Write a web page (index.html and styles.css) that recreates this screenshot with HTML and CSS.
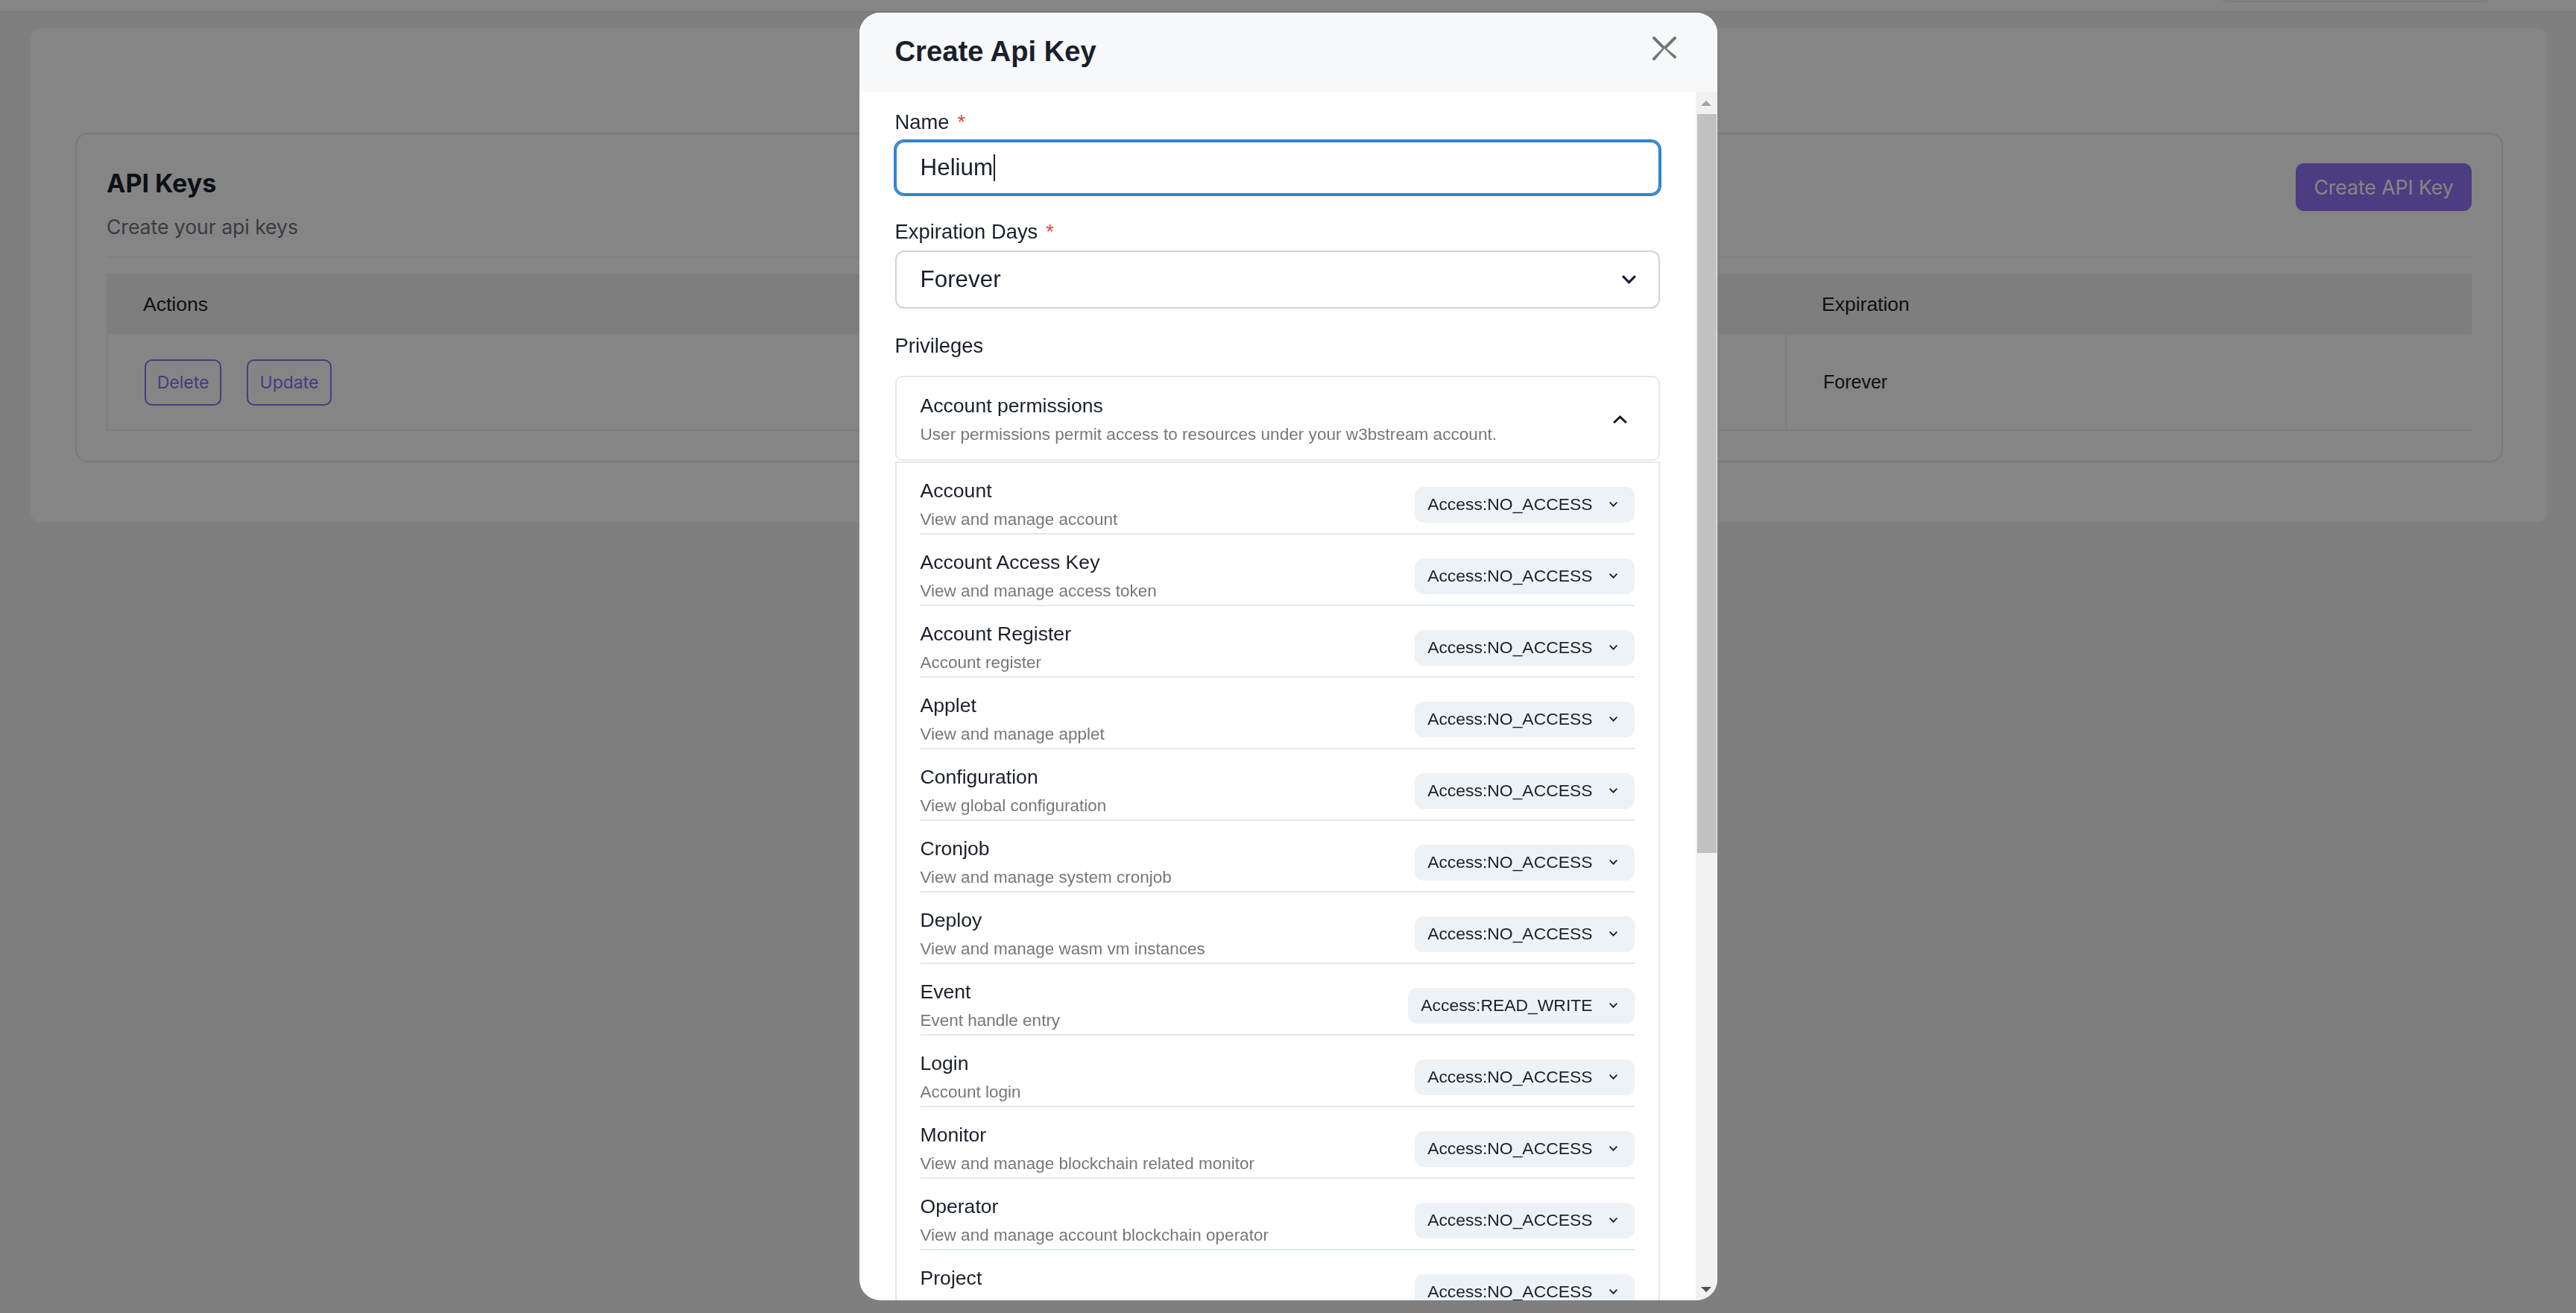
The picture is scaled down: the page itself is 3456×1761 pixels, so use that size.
FILE: index.html
```html
<!DOCTYPE html>
<html lang="en">
<head>
<meta charset="utf-8">
<title>API Keys</title>
<link rel="stylesheet" href="styles.css">
</head>
<body>
<div class="topbar"><div class="topbar-pill"></div></div>
<div class="main">
  <div class="panel">
    <div class="card">
      <div class="card-head">
        <div>
          <div class="card-title">API Keys</div>
          <div class="card-sub">Create your api keys</div>
        </div>
        <div class="btn-create">Create API Key</div>
      </div>
      <div class="card-divider"></div>
      <div class="table">
        <div class="thead">
          <div class="th">Actions</div>
          <div class="th">Name</div>
          <div class="th">Expiration</div>
        </div>
        <div class="trow">
          <div class="td"><span class="btn-outline btn-del">Delete</span><span class="btn-outline btn-upd">Update</span></div>
          <div class="td">Helium</div>
          <div class="td">Forever</div>
        </div>
      </div>
    </div>
  </div>
</div>

<div class="overlay">
  <div class="modal">
    <div class="modal-head">
      <h2 class="modal-title">Create Api Key</h2>
      <svg class="close" viewBox="0 0 24 24" width="32" height="32"><path fill="#757575" d="M.439,21.44a1.5,1.5,0,0,0,2.122,2.121L11.823,12.3a.25.25,0,0,1,.354,0l9.262,9.263a1.5,1.5,0,1,0,2.122-2.121L14.3,12.177a.25.25,0,0,1,0-.354l9.263-9.262A1.5,1.5,0,0,0,21.439.44L12.177,9.7a.25.25,0,0,1-.354,0L2.561.44A1.5,1.5,0,0,0,.439,2.561L9.7,11.823a.25.25,0,0,1,0,.354Z"/></svg>
    </div>
    <div class="modal-body">
      <div class="content">
        <div class="field">
          <div class="label">Name<span class="req">*</span></div>
          <div class="input"><span>Helium</span><span class="caret"></span></div>
        </div>
        <div class="field">
          <div class="label">Expiration Days<span class="req">*</span></div>
          <div class="select"><span>Forever</span>
            <svg class="chev-lg" viewBox="6 8.59 12 7.41" preserveAspectRatio="none"><path fill="#1a202c" d="M16.59 8.59L12 13.17 7.41 8.59 6 10l6 6 6-6z"/></svg>
          </div>
        </div>
        <div class="field">
          <div class="label priv">Privileges</div>
          <div class="acc-btn">
            <div>
              <div class="acc-title">Account permissions</div>
              <div class="acc-desc">User permissions permit access to resources under your w3bstream account.</div>
            </div>
            <svg class="chev-up" viewBox="6 8.59 12 7.41" preserveAspectRatio="none"><path fill="#1a202c" d="M16.59 8.59L12 13.17 7.41 8.59 6 10l6 6 6-6z"/></svg>
          </div>
          <div class="acc-panel">
            <div class="perm"><div><div class="perm-name">Account</div><div class="perm-desc">View and manage account</div></div><div class="pill">Access:NO_ACCESS<svg class="chev-sm" viewBox="6 8.59 12 7.41" preserveAspectRatio="none"><path d="M16.59 8.59L12 13.17 7.41 8.59 6 10l6 6 6-6z"/></svg></div></div>
            <div class="perm"><div><div class="perm-name">Account Access Key</div><div class="perm-desc">View and manage access token</div></div><div class="pill">Access:NO_ACCESS<svg class="chev-sm" viewBox="6 8.59 12 7.41" preserveAspectRatio="none"><path d="M16.59 8.59L12 13.17 7.41 8.59 6 10l6 6 6-6z"/></svg></div></div>
            <div class="perm"><div><div class="perm-name">Account Register</div><div class="perm-desc">Account register</div></div><div class="pill">Access:NO_ACCESS<svg class="chev-sm" viewBox="6 8.59 12 7.41" preserveAspectRatio="none"><path d="M16.59 8.59L12 13.17 7.41 8.59 6 10l6 6 6-6z"/></svg></div></div>
            <div class="perm"><div><div class="perm-name">Applet</div><div class="perm-desc">View and manage applet</div></div><div class="pill">Access:NO_ACCESS<svg class="chev-sm" viewBox="6 8.59 12 7.41" preserveAspectRatio="none"><path d="M16.59 8.59L12 13.17 7.41 8.59 6 10l6 6 6-6z"/></svg></div></div>
            <div class="perm"><div><div class="perm-name">Configuration</div><div class="perm-desc">View global configuration</div></div><div class="pill">Access:NO_ACCESS<svg class="chev-sm" viewBox="6 8.59 12 7.41" preserveAspectRatio="none"><path d="M16.59 8.59L12 13.17 7.41 8.59 6 10l6 6 6-6z"/></svg></div></div>
            <div class="perm"><div><div class="perm-name">Cronjob</div><div class="perm-desc">View and manage system cronjob</div></div><div class="pill">Access:NO_ACCESS<svg class="chev-sm" viewBox="6 8.59 12 7.41" preserveAspectRatio="none"><path d="M16.59 8.59L12 13.17 7.41 8.59 6 10l6 6 6-6z"/></svg></div></div>
            <div class="perm"><div><div class="perm-name">Deploy</div><div class="perm-desc">View and manage wasm vm instances</div></div><div class="pill">Access:NO_ACCESS<svg class="chev-sm" viewBox="6 8.59 12 7.41" preserveAspectRatio="none"><path d="M16.59 8.59L12 13.17 7.41 8.59 6 10l6 6 6-6z"/></svg></div></div>
            <div class="perm"><div><div class="perm-name">Event</div><div class="perm-desc">Event handle entry</div></div><div class="pill">Access:READ_WRITE<svg class="chev-sm" viewBox="6 8.59 12 7.41" preserveAspectRatio="none"><path d="M16.59 8.59L12 13.17 7.41 8.59 6 10l6 6 6-6z"/></svg></div></div>
            <div class="perm"><div><div class="perm-name">Login</div><div class="perm-desc">Account login</div></div><div class="pill">Access:NO_ACCESS<svg class="chev-sm" viewBox="6 8.59 12 7.41" preserveAspectRatio="none"><path d="M16.59 8.59L12 13.17 7.41 8.59 6 10l6 6 6-6z"/></svg></div></div>
            <div class="perm"><div><div class="perm-name">Monitor</div><div class="perm-desc">View and manage blockchain related monitor</div></div><div class="pill">Access:NO_ACCESS<svg class="chev-sm" viewBox="6 8.59 12 7.41" preserveAspectRatio="none"><path d="M16.59 8.59L12 13.17 7.41 8.59 6 10l6 6 6-6z"/></svg></div></div>
            <div class="perm"><div><div class="perm-name">Operator</div><div class="perm-desc">View and manage account blockchain operator</div></div><div class="pill">Access:NO_ACCESS<svg class="chev-sm" viewBox="6 8.59 12 7.41" preserveAspectRatio="none"><path d="M16.59 8.59L12 13.17 7.41 8.59 6 10l6 6 6-6z"/></svg></div></div>
            <div class="perm"><div><div class="perm-name">Project</div><div class="perm-desc">View and manage project</div></div><div class="pill">Access:NO_ACCESS<svg class="chev-sm" viewBox="6 8.59 12 7.41" preserveAspectRatio="none"><path d="M16.59 8.59L12 13.17 7.41 8.59 6 10l6 6 6-6z"/></svg></div></div>
            <div class="perm"><div><div class="perm-name">Publisher</div><div class="perm-desc">View and manage publisher</div></div><div class="pill">Access:NO_ACCESS<svg class="chev-sm" viewBox="6 8.59 12 7.41" preserveAspectRatio="none"><path d="M16.59 8.59L12 13.17 7.41 8.59 6 10l6 6 6-6z"/></svg></div></div>
          </div>
        </div>
      </div>
      <div class="scrollbar">
        <div class="sb-btn"><span class="tri-up"></span></div>
        <div class="sb-thumb"></div>
        <div class="sb-track"></div>
        <div class="sb-btn"><span class="tri-down"></span></div>
      </div>
    </div>
  </div>
</div>
</body>
</html>
```
FILE: styles.css
```css
* { box-sizing: border-box; }
html, body { margin: 0; padding: 0; }
body {
  width: 3456px;
  height: 1761px;
  overflow: hidden;
  background: #f3f4f6;
  font-family: "Liberation Sans", Arial, sans-serif;
  color: #1a202c;
}

/* ---------- background page ---------- */
.topbar {
  height: 17px;
  background: #fff;
  border-bottom: 2px solid #e2e8f0;
  display: flex;
  justify-content: flex-end;
  align-items: flex-end;
  overflow: hidden;
  padding-right: 106px;
}
.topbar-pill {
  flex: none;
  width: 380px;
  height: 60px;
  margin-bottom: 12px;
  border: 2px solid #eceff3;
  border-radius: 20px;
  background: #fff;
}
.main { padding: 21px 39px 0 41px; }
.panel {
  background: #fff;
  border-radius: 14px;
  height: 662px;
  padding: 140px 59px 0 60px;
}
.card {
  border: 2px solid #e2e8f0;
  border-radius: 17px;
  height: 442px;
  padding: 39px 40px 0;
}
.card-head {
  display: flex;
  justify-content: space-between;
  align-items: flex-start;
}
.card-title {
  font-family: Inter, "Liberation Sans", sans-serif;
  font-weight: 700;
  font-size: 34px;
  line-height: 41px;
  margin-top: 6px;
  color: #1a202c;
}
.card-sub {
  font-family: Inter, "Liberation Sans", sans-serif;
  font-size: 26.5px;
  line-height: 40px;
  margin-top: 18px;
  color: #6b7280;
}
.btn-create {
  width: 236px;
  height: 64px;
  border-radius: 11px;
  background: #9373f7;
  color: #fff;
  font-family: Inter, "Liberation Sans", sans-serif;
  font-size: 26.5px;
  display: flex;
  align-items: center;
  justify-content: center;
}
.card-divider { height: 2px; background: #f1f3f6; margin-top: 20px; }
.table { margin-top: 21px; }
.thead, .trow {
  display: grid;
  grid-template-columns: 1100px 1152px 921px;
}
.thead { height: 82px; background: #f2f2f3; }
.th {
  padding-left: 49px;
  display: flex;
  align-items: center;
  font-size: 26.5px;
  color: #1a202c;
}
.trow { height: 129px; border-bottom: 2px solid #edf2f7; }
.td {
  border-left: 2px solid #edf2f7;
  padding-left: 49px;
  display: flex;
  align-items: center;
  gap: 34px;
  font-size: 25px;
  color: #1a202c;
}
.btn-outline {
  height: 62px;
  border: 2px solid #8f6ef5;
  border-radius: 10px;
  color: #8f6ef5;
  font-family: Inter, "Liberation Sans", sans-serif;
  font-size: 23px;
  display: flex;
  align-items: center;
  justify-content: center;
}
.btn-del { width: 103px; }
.btn-upd { width: 114px; }

/* ---------- overlay + modal ---------- */
.overlay {
  position: fixed;
  inset: 0;
  background: rgba(0, 0, 0, 0.48);
  display: flex;
  justify-content: center;
  align-items: flex-start;
  padding-top: 17px;
}
.modal {
  width: 1151px;
  height: 1727px;
  background: #fff;
  border-radius: 28px;
  overflow: hidden;
  display: flex;
  flex-direction: column;
}
.modal-head {
  flex: none;
  height: 106px;
  background: #f7f8fa;
  display: flex;
  justify-content: space-between;
  align-items: flex-start;
  padding: 23px 55px 0 48px;
}
.modal-title {
  margin: 0;
  font-weight: 700;
  font-size: 38.2px;
  line-height: 57px;
  color: #1a202c;
}
.close { flex: none; margin-top: 9px; }

.modal-body { flex: 1; min-height: 0; display: flex; }
.content {
  flex: 1;
  min-width: 0;
  overflow: hidden;
  padding: 20px 48px 0;
}
.field + .field { margin-top: 29px; }
.label {
  font-size: 27.4px;
  line-height: 41px;
  margin-bottom: 5px;
  color: #1a202c;
}
.label.priv { margin-bottom: 20px; }
.req { color: #e53e3e; margin-left: 11px; }
.input {
  height: 72px;
  border: 2px solid #3182ce;
  box-shadow: 0 0 0 2px #3182ce;
  border-radius: 12px;
  padding-left: 32px;
  display: flex;
  align-items: center;
  font-size: 31.4px;
  color: #1a202c;
}
.caret {
  width: 2px;
  height: 36px;
  background: #1a202c;
  margin-left: 1px;
}
.select {
  height: 78px;
  border: 2px solid #cbd5e0;
  border-radius: 12px;
  padding: 0 30px 0 32px;
  display: flex;
  align-items: center;
  justify-content: space-between;
  font-size: 31.4px;
  color: #1a202c;
}
.chev-lg { width: 19px; height: 12px; display: block; }

.acc-btn {
  border: 2px solid #e2e8f0;
  border-radius: 10px;
  padding: 18px 42px 15px 32px;
  display: flex;
  align-items: center;
  justify-content: space-between;
}
.acc-title { font-size: 26.6px; line-height: 40px; color: #1a202c; }
.acc-desc { font-size: 22.6px; line-height: 37px; color: #777777; }
.chev-up { width: 19px; height: 11px; display: block; transform: rotate(180deg); }

.acc-panel {
  margin-top: 1px;
  border: 2px solid #e2e8f0;
  border-bottom: none;
  padding: 0 32px;
}
.perm {
  display: flex;
  align-items: center;
  padding-top: 17px;
  border-bottom: 2px solid #e2e8f0;
}
.perm-name { font-size: 26.6px; line-height: 40px; color: #1a202c; }
.perm-desc { font-size: 22.5px; line-height: 37px; color: #777777; }
.pill {
  margin-left: auto;
  flex: none;
  height: 48px;
  border-radius: 12px;
  background: #edf2f7;
  display: flex;
  align-items: center;
  padding: 0 23px 0 17px;
  font-size: 22.9px;
  color: #1a202c;
}
.chev-sm { width: 11px; height: 7px; margin-left: 22px; display: block; fill: #1a202c; }

.scrollbar {
  flex: none;
  width: 29px;
  background: #f1f1f1;
  display: flex;
  flex-direction: column;
}
.sb-btn {
  flex: none;
  height: 30px;
  display: flex;
  align-items: center;
  justify-content: center;
}
.tri-up {
  width: 0; height: 0;
  border-left: 7px solid transparent;
  border-right: 7px solid transparent;
  border-bottom: 7px solid #a3a3a3;
}
.tri-down {
  width: 0; height: 0;
  border-left: 7px solid transparent;
  border-right: 7px solid transparent;
  border-top: 7px solid #505050;
}
.sb-thumb {
  flex: none;
  height: 991px;
  margin: 0 1px 0 2px;
  background: #c1c1c1;
}
.sb-track { flex: 1; }
```
